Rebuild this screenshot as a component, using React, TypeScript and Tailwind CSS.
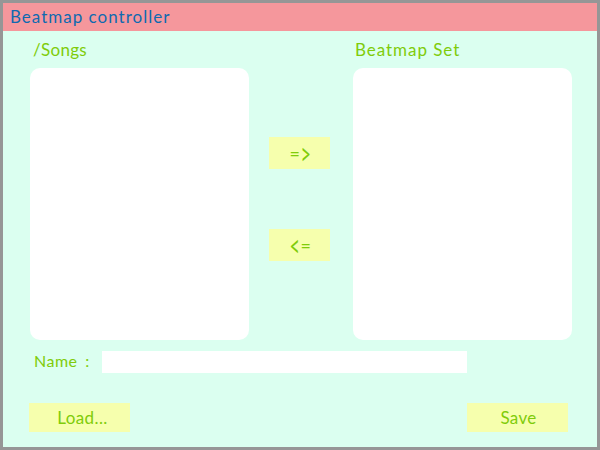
const button =
  "flex items-center justify-center whitespace-nowrap bg-[#f6ffad] leading-none";
const list = "h-[272px] w-[219px] rounded-[10px] bg-white";
const bracket = "inline-block scale-x-90 scale-y-150";
const equals = "inline-block scale-x-90";

export default function App() {
  return (
    <div className="flex h-[450px] w-[600px] flex-col border-[3px] border-[#969696] bg-[#dbfff0] font-['Lato',sans-serif] text-[17px] text-[#7fcc0a]">
      <header className="flex h-7 shrink-0 items-center bg-[#f5979c] pb-0.5 pl-[7px] text-[17px] leading-none tracking-[1px] text-[#0f6ab0]">
        Beatmap controller
      </header>
      <main className="flex flex-1 flex-col pl-[27px] pr-[25px]">
        <div className="flex">
          <section className="flex flex-col">
            <h2 className="flex h-[37px] items-center pl-[3px] leading-none tracking-[0.3px]">/Songs</h2>
            <div className={list} />
          </section>
          <div className="ml-5 mr-[23px] flex flex-col gap-[60px] pt-[106px] text-[20px] tracking-[-1px]">
            <button className={`${button} h-8 w-[61px]`}>
              <span className={equals}>=</span>
              <span className={bracket}>&gt;</span>
            </button>
            <button className={`${button} h-8 w-[61px]`}>
              <span className={bracket}>&lt;</span>
              <span className={equals}>=</span>
            </button>
          </div>
          <section className="flex flex-col">
            <h2 className="flex h-[37px] items-center pl-0.5 leading-none tracking-[0.95px]">Beatmap Set</h2>
            <div className={list} />
          </section>
        </div>
        <label className="mt-[11px] flex h-[22px] items-center leading-none">
          <span className="w-[72px] whitespace-pre pb-0.5 pl-1 text-[16px] tracking-[0.5px] [word-spacing:3px]">Name :</span>
          <input className="h-[22px] w-[365px] bg-white outline-none" />
        </label>
        <div className="mt-[30px] flex justify-between">
          <button className={`${button} -ml-px h-[29px] w-[101px] pl-1.5 tracking-[0.4px]`}>Load...</button>
          <button className={`${button} mr-1 h-[29px] w-[101px] pl-0.5 tracking-[0.3px]`}>Save</button>
        </div>
      </main>
    </div>
  );
}
